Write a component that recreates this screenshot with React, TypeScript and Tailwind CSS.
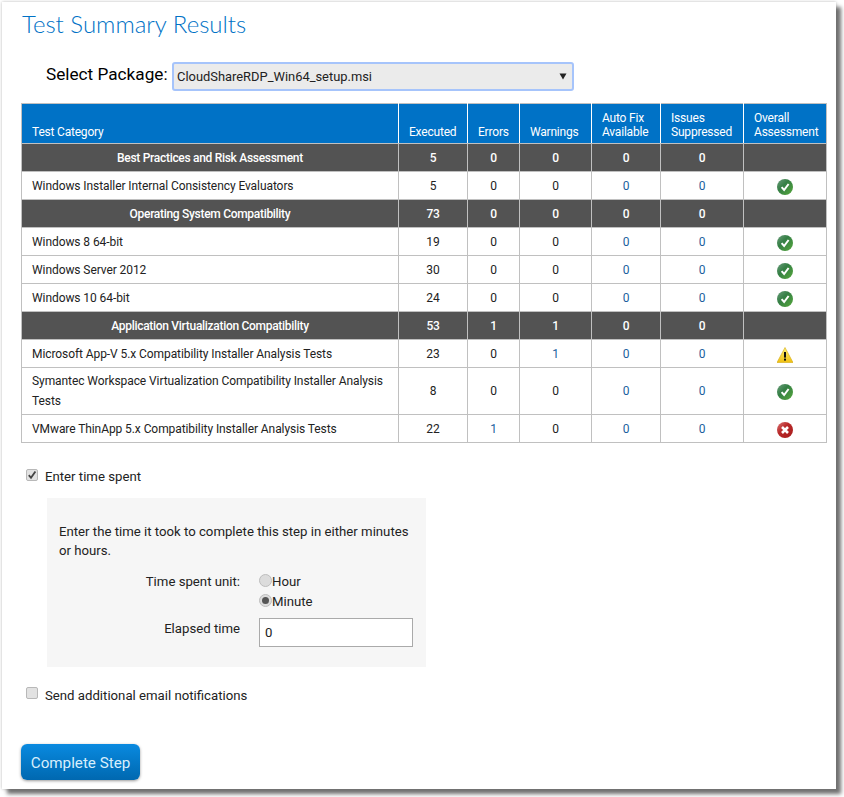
import { useId } from "react";

type Status = "ok" | "warn" | "error";

type Row = {
  name: string;
  executed: number;
  errors: number;
  warnings: number;
  status?: Status;
  group?: boolean;
  tall?: boolean;
};

const rows: Row[] = [
  { name: "Best Practices and Risk Assessment", executed: 5, errors: 0, warnings: 0, group: true },
  { name: "Windows Installer Internal Consistency Evaluators", executed: 5, errors: 0, warnings: 0, status: "ok" },
  { name: "Operating System Compatibility", executed: 73, errors: 0, warnings: 0, group: true },
  { name: "Windows 8 64-bit", executed: 19, errors: 0, warnings: 0, status: "ok" },
  { name: "Windows Server 2012", executed: 30, errors: 0, warnings: 0, status: "ok" },
  { name: "Windows 10 64-bit", executed: 24, errors: 0, warnings: 0, status: "ok" },
  { name: "Application Virtualization Compatibility", executed: 53, errors: 1, warnings: 1, group: true },
  { name: "Microsoft App-V 5.x Compatibility Installer Analysis Tests", executed: 23, errors: 0, warnings: 1, status: "warn" },
  { name: "Symantec Workspace Virtualization Compatibility Installer Analysis Tests", executed: 8, errors: 0, warnings: 0, status: "ok", tall: true },
  { name: "VMware ThinApp 5.x Compatibility Installer Analysis Tests", executed: 22, errors: 1, warnings: 0, status: "error" },
];

const StatusIcon = ({ status }: { status: Status }) => {
  const id = useId();
  if (status === "warn") {
    return (
      <svg width="16" height="16" viewBox="0 0 16 16" className="mx-auto block">
        <defs>
          <linearGradient id={id} x1="0" y1="0" x2="0" y2="1">
            <stop offset="0" stopColor="#fff27a" />
            <stop offset="1" stopColor="#f0c010" />
          </linearGradient>
        </defs>
        <path d="M8 .5 16 15.5H0Z" fill={`url(#${id})`} stroke="#d4a90f" strokeWidth="0.6" strokeLinejoin="round" />
        <rect x="7" y="5" width="2" height="5.6" fill="#111" />
        <rect x="7" y="11.6" width="2" height="2" fill="#111" />
      </svg>
    );
  }
  const ok = status === "ok";
  return (
    <svg width="16" height="16" viewBox="0 0 16 16" className="mx-auto block">
      <defs>
        <linearGradient id={id} x1="0" y1="0" x2="1" y2="1">
          <stop offset="0" stopColor={ok ? "#6f9f80" : "#dd7a7a"} />
          <stop offset="0.4" stopColor={ok ? "#357f45" : "#b92a2a"} />
          <stop offset="1" stopColor={ok ? "#55a83a" : "#a81c1c"} />
        </linearGradient>
      </defs>
      <circle cx="8" cy="8" r="8" fill={`url(#${id})`} />
      {ok ? (
        <path d="M4.6 8.2 7.1 11 11.6 5" fill="none" stroke="#fff" strokeWidth="2" />
      ) : (
        <path d="M5 5 11 11M11 5 5 11" fill="none" stroke="#fff" strokeWidth="2.6" />
      )}
    </svg>
  );
};

const Radio = ({ checked }: { checked?: boolean }) => (
  <span className="w-[13px] h-[13px] rounded-full bg-[#dcdcdc] border border-[#bdbdbd] flex items-center justify-center shrink-0 mt-[-3px]">
    {checked && <span className="w-[7px] h-[7px] rounded-full bg-[#555]" />}
  </span>
);

const Checkbox = ({ checked }: { checked?: boolean }) => (
  <span className="w-[12px] h-[12px] rounded-[2px] bg-[#e2e2e2] border border-[#b8b8b8] flex items-center justify-center shrink-0 mt-[-4px]">
    {checked && (
      <svg width="10" height="10" viewBox="0 0 10 10">
        <path d="M1.8 5.2 4 7.8 8.4 1.4" fill="none" stroke="#444" strokeWidth="1.8" />
      </svg>
    )}
  </span>
);

const Num = ({ value, blue }: { value: number; blue?: boolean }) => (
  <td className={`border border-[#c0c0c0] text-center ${blue ? "text-[#1a5f9e]" : ""}`}>{value}</td>
);

export default function App() {
  return (
    <div className="w-[844px] h-[797px] bg-white overflow-hidden pt-[2px] pl-[2px] text-[13.2px] text-[#222]" style={{ fontFamily: "Roboto, sans-serif" }}>
      <div className="w-[834px] h-[787px] bg-white shadow-[5px_5px_4px_#707070,0_0_3px_#bbbbbb] pl-[19px] pt-[8px]">
        <h1 className="text-[24px] leading-[28px] font-light text-[#0072c6] pl-[1px] font-['Lato',sans-serif]">Test Summary Results</h1>

        <div className="flex items-center mt-[24px] pl-[25px] h-[29px]">
          <label className="text-[17.2px] w-[126px] text-black leading-none whitespace-nowrap mt-[-3px]">Select Package:</label>
          <div className="w-[402px] h-[29px] bg-[#ebebeb] border-2 border-[#a6c4fb] rounded-[3px] flex items-center justify-between pl-[3px] pr-[5px]">
            <span className="text-[12.9px] text-[#222] pt-[1px]">CloudShareRDP_Win64_setup.msi</span>
            <svg width="8" height="8" viewBox="0 0 8 8" className="mb-[2px]">
              <path d="M.5 1.5h7L4 7.5Z" fill="#222" />
            </svg>
          </div>
        </div>

        <table className="mt-[12px] w-[805px] table-fixed border-collapse text-[12px] tracking-[-0.08px]">
          <colgroup>
            <col className="w-[377px]" />
            <col className="w-[69px]" />
            <col className="w-[52px]" />
            <col className="w-[72px]" />
            <col className="w-[69px]" />
            <col className="w-[83px]" />
            <col className="w-[83px]" />
          </colgroup>
          <thead>
            <tr className="bg-[#0072c6] text-white h-[40px] text-left leading-[14px] align-bottom tracking-[-0.2px]">
              <th className="font-normal border border-[#c0c0c0] pl-[10px] pb-[4px] border-r-white">Test Category</th>
              <th className="font-normal border border-[#c0c0c0] pl-[10px] pb-[4px] border-r-white">Executed</th>
              <th className="font-normal border border-[#c0c0c0] pl-[10px] pb-[4px] border-r-white">Errors</th>
              <th className="font-normal border border-[#c0c0c0] pl-[10px] pb-[4px] border-r-white">Warnings</th>
              <th className="font-normal border border-[#c0c0c0] pl-[10px] pb-[4px] border-r-white">Auto Fix Available</th>
              <th className="font-normal border border-[#c0c0c0] pl-[10px] pb-[4px] border-r-white">Issues Suppressed</th>
              <th className="font-normal border border-[#c0c0c0] pl-[10px] pb-[4px]">Overall Assessment</th>
            </tr>
          </thead>
          <tbody>
            {rows.map((row) =>
              row.group ? (
                <tr key={row.name} className="bg-[#535353] text-white h-[28px] font-medium tracking-[-0.3px]">
                  <td className="border border-[#c0c0c0] text-center">{row.name}</td>
                  <td className="border border-[#c0c0c0] text-center">{row.executed}</td>
                  <td className="border border-[#c0c0c0] text-center">{row.errors}</td>
                  <td className="border border-[#c0c0c0] text-center">{row.warnings}</td>
                  <td className="border border-[#c0c0c0] text-center">0</td>
                  <td className="border border-[#c0c0c0] text-center">0</td>
                  <td className="border border-[#c0c0c0]" />
                </tr>
              ) : (
                <tr key={row.name} className={row.tall ? "h-[47px] leading-[20px]" : "h-[28px]"}>
                  <td className="border border-[#c0c0c0] pl-[10px] pr-[8px]">{row.name}</td>
                  <Num value={row.executed} />
                  <Num value={row.errors} blue={row.errors > 0} />
                  <Num value={row.warnings} blue={row.warnings > 0} />
                  <Num value={0} blue />
                  <Num value={0} blue />
                  <td className="border border-[#c0c0c0] pt-[2px]">
                    <StatusIcon status={row.status!} />
                  </td>
                </tr>
              )
            )}
          </tbody>
        </table>

        <div className="flex items-center gap-[7px] mt-[25px] pl-[5px] h-[18px]">
          <Checkbox checked />
          <span>Enter time spent</span>
        </div>

        <div className="w-[379px] h-[169px] bg-[#f6f6f6] ml-[26px] mt-[12px] pt-[24px] pl-[12px] pr-[10px]">
          <p className="leading-[19px]">Enter the time it took to complete this step in either minutes or hours.</p>
          <div className="flex mt-[12px]">
            <span className="w-[181px] text-right leading-[20px]">Time spent unit:</span>
            <div className="ml-[19px]">
              <div className="flex items-center h-[20px]"><Radio /><span>Hour</span></div>
              <div className="flex items-center h-[20px]"><Radio checked /><span>Minute</span></div>
            </div>
          </div>
          <div className="flex mt-[6px]">
            <span className="w-[181px] text-right leading-[20px] pt-[1px]">Elapsed time</span>
            <input readOnly value="0" className="ml-[19px] w-[154px] h-[29px] bg-white border border-[#aaaaaa] px-[5px] outline-none" />
          </div>
        </div>

        <div className="flex items-center gap-[7px] mt-[19px] pl-[5px] h-[18px]">
          <Checkbox />
          <span className="pt-[2px]">Send additional email notifications</span>
        </div>

        <button className="block mt-[40px] w-[119px] h-[36px] pt-[2px] rounded-[6px] bg-gradient-to-b from-[#0a8ae0] to-[#0068b0] text-[#d8eefc] text-[15.2px] shadow-[0_1px_3px_#999999]">Complete Step</button>
      </div>
    </div>
  );
}
